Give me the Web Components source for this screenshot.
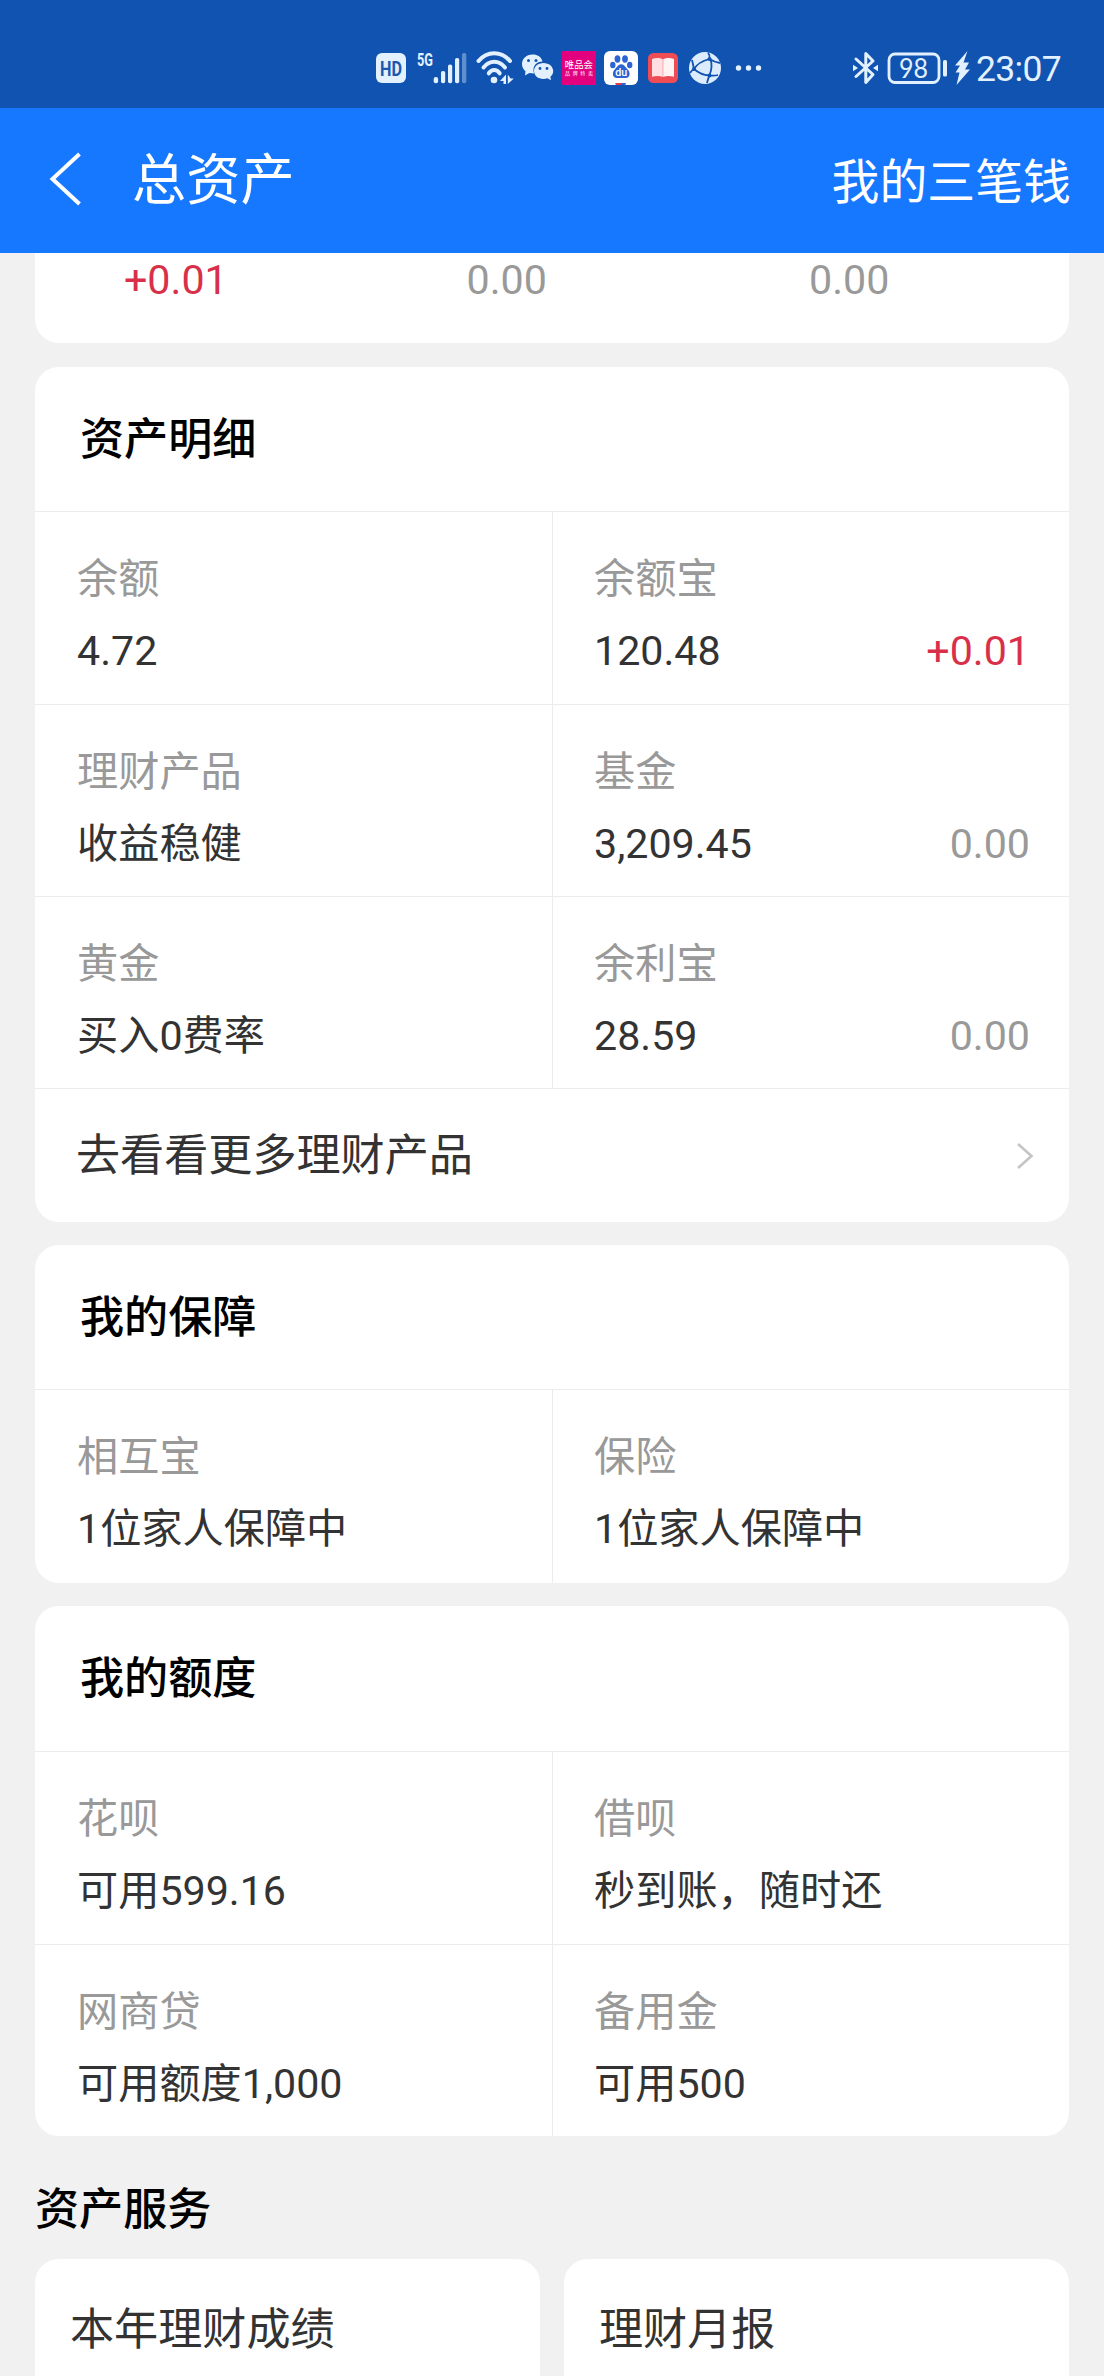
<!DOCTYPE html>
<html lang="zh-CN">
<head>
<meta charset="utf-8">
<meta name="viewport" content="width=1104">
<title>总资产</title>
<style>
html,body{margin:0;padding:0}
body{width:1104px;height:2376px;overflow:hidden;background:#f1f1f1;font-family:Roboto,"Noto Sans CJK SC",sans-serif;font-size:41.2px;color:#333}
</style>
</head>
<body>
<asset-page></asset-page>
<script>
function define(name, html) {
  const t = document.createElement('template');
  t.innerHTML = html;
  customElements.define(name, class extends HTMLElement {
    constructor() {
      super();
      this.attachShadow({mode: 'open'}).appendChild(t.content.cloneNode(true));
    }
  });
}

define('status-bar', `
<style>
:host{display:flex;align-items:center;box-sizing:border-box;height:108px;padding:27px 43px 0 376px;background:#1153b1;color:#e3f1ff}
svg{display:block;flex:none;overflow:visible}
.clock{font-size:35.5px;line-height:40px;width:85px;letter-spacing:-.7px;white-space:nowrap;margin:2px 0 0 6px}
.sp{flex:1}
</style>
<svg width="30" height="34" viewBox="0 0 30 34"><rect y="2" width="30" height="30" rx="6" fill="#e3f1ff"/><text x="15" y="24.6" text-anchor="middle" font-family="Roboto" font-weight="700" font-size="20" textLength="22" lengthAdjust="spacingAndGlyphs" fill="#1b58ae">HD</text></svg>
<svg width="51" height="34" viewBox="0 0 51 34" style="margin-left:10px"><text x="1" y="14.5" font-family="Roboto" font-weight="700" font-size="18.500" textLength="16" lengthAdjust="spacingAndGlyphs" fill="#e3f1ff">5G</text><g fill="#e3f1ff"><rect x="17.700" y="26" width="4.400" height="6.200" rx="2"/><rect x="25" y="20" width="4.200" height="12.200" rx="1.800"/><rect x="32" y="13.500" width="4.200" height="18.700" rx="1.800"/><rect x="39" y="7" width="4.200" height="25.200" rx="1.800"/><rect x="46" y="2" width="4.300" height="30.200" rx="1.800" opacity=".38"/></g></svg>
<svg width="38" height="34" viewBox="0 0 38 34" style="margin-left:9px"><g fill="none" stroke="#e3f1ff" stroke-width="4" stroke-linecap="round"><path d="M2.500 10C11-.5 25.500-.5 34 10"/><path d="M7.500 16.500C13.500 8.800 23 8.800 29 16.500"/><path d="M12.800 22.300C16 18 20.500 18 23.700 22.300"/></g><circle cx="18" cy="29" r="3.300" fill="#e3f1ff"/><path d="M30 23.500v9.500h-2.500v-3h-3.500zM31.800 23.500v9.500l6-5.500h-3.200z" fill="#e3f1ff"/></svg>
<svg width="33" height="34" viewBox="0 0 33 34" style="margin-left:7px"><path d="M11.500 3.500C5 3.500 1 8 1 13c0 3 1.300 5.500 3.500 7.200L4 24.500l4.300-2.400 4.700.5C10.800 14.500 16 10.500 21.500 10.500 20.500 6 16.500 3.500 11.500 3.500z" fill="#e3f1ff"/><path d="M22.500 12c-5.500 0-9.500 3.600-9.500 8s4 8 9.500 8c1.500 0 2.800-.3 4-.7l3.500 2-.6-3.500c1.800-1.500 2.800-3.500 2.800-5.800 0-4.400-4.200-8-9.700-8z" fill="#e3f1ff"/><g fill="#1153b1"><circle cx="7.500" cy="9.500" r="1.500"/><circle cx="15" cy="9.500" r="1.500"/><circle cx="19" cy="17.500" r="1.400"/><circle cx="26" cy="17.500" r="1.400"/></g></svg>
<svg width="34" height="34" viewBox="0 0 34 34" style="margin-left:8px"><rect width="34" height="34" rx="1" fill="#e2007f"/><g fill="#fff" font-family="Noto Sans CJK SC"><text x="2.800" y="17" font-size="9.400">唯品会</text><text x="3" y="24.300" font-size="5" textLength="28">品牌特卖</text></g></svg>
<svg width="34" height="34" viewBox="0 0 34 34" style="margin-left:8px"><rect width="34" height="34" rx="6" fill="#fff"/><g fill="#2c65d2"><ellipse cx="13.500" cy="8" rx="2.900" ry="3.700"/><ellipse cx="21" cy="8" rx="2.900" ry="3.700"/><ellipse cx="8.800" cy="14" rx="2.700" ry="3.300"/><ellipse cx="25.700" cy="14" rx="2.700" ry="3.300"/><path d="M17.200 13.200c-3.400 0-4.300 3.300-6.500 5.200-2.600 2.200-2.700 8.600 2.300 8.600h8.700c5 0 4.700-6.300 2-8.600-2.200-1.900-3.200-5.200-6.500-5.200z"/></g><text x="17.300" y="25" text-anchor="middle" font-family="Roboto" font-weight="500" font-size="10" textLength="12" lengthAdjust="spacingAndGlyphs" fill="#fff">du</text><path d="M11 32h11l-1 2h-9z" fill="#e23b50"/><path d="M17 32h5l-1 2h-4z" fill="#3468c8"/></svg>
<svg width="30" height="34" viewBox="0 0 30 34" style="margin-left:10px"><rect y="2" width="30" height="30" rx="5.500" fill="#ee4d55"/><path d="M4 8c4-1.500 8-1.300 10.800.3V26C12 24.800 8 24.800 4 25.800z" fill="#ffdfe2"/><path d="M15.200 8.300C18 6.700 22 6.500 26 8v17.800c-4-1-8-1-10.800.2z" fill="#fff4f3"/></svg>
<svg width="32" height="34" viewBox="0 0 32 34" style="margin-left:11px"><circle cx="16" cy="17" r="16" fill="#dcecfd"/><g fill="none" stroke="#1153b1" stroke-width="1.800"><path d="M19 1.500Q21 4 20.500 8Q25 11 31 12M20.500 8Q9 11 5 18Q2 20 1 22M3 9Q4 13 5 18Q12 24 20 24.500Q26 25 29 24M21.500 8Q24 16 20.500 24Q19 28 18 32"/></g><g fill="#1153b1"><circle cx="20.500" cy="8" r="2"/><circle cx="5" cy="18" r="2"/><circle cx="20.500" cy="24.500" r="2"/></g></svg>
<svg width="28" height="34" viewBox="0 0 28 34" style="margin-left:14px"><g fill="#e3f1ff"><circle cx="3.500" cy="17" r="2.700"/><circle cx="13.500" cy="17" r="2.700"/><circle cx="23.500" cy="17" r="2.700"/></g></svg>
<span class="sp"></span>
<svg width="25" height="34" viewBox="0 0 25 34"><path d="M3 8l17 15.500-7.200 8V2.500L20 10 3 25.500" fill="none" stroke="#e3f1ff" stroke-width="3" stroke-linejoin="round" stroke-linecap="round"/><path d="M0 13.800l5 3.200-5 3.200zM25 13.800L20 17l5 3.200z" fill="#e3f1ff"/></svg>
<svg width="60" height="34" viewBox="0 0 60 34" style="margin-left:9px"><rect x="2" y="3" width="50" height="28.500" rx="6" fill="none" stroke="#e3f1ff" stroke-width="2.800"/><rect x="56" y="9" width="4" height="16.500" rx="1.500" fill="#e3f1ff"/><text x="26.500" y="26.700" text-anchor="middle" font-family="Lato" font-size="26" textLength="29" lengthAdjust="spacingAndGlyphs" fill="#e3f1ff">98</text></svg>
<svg width="15" height="36" viewBox="0 0 15 36" style="margin-left:8px"><path d="M12.500 1L0 15.500h5L.5 22.500h4L1.500 35 15 19.500h-5l4-7H8.500z" fill="#e3f1ff"/></svg>
<span class="clock">23:07</span>
`);

define('nav-bar', `
<style>
:host{display:flex;align-items:center;box-sizing:border-box;height:145px;padding:0 33px 0 49px;background:#1677ff;color:#fff}
.t{font-size:54.2px;line-height:80px;margin:0 0 0 50px;flex:1}
.a{font-size:47.9px;line-height:70px;margin-top:4px}
svg{display:block;margin-top:-3px}
</style>
<svg width="33" height="54" viewBox="0 0 33 54"><path d="M30.500 2L3.500 27l27 25" fill="none" stroke="#fff" stroke-width="4"/></svg>
<div class="t"><slot name="title"></slot></div>
<div class="a"><slot name="action"></slot></div>
`);

define('summary-card', `
<style>
:host{display:flex;box-sizing:border-box;height:90px;padding:0 0 0 89px;background:#fff;border-radius:0 0 24px 24px}
::slotted(*){flex:0 0 342.5px;line-height:55px;color:#999}
::slotted(:last-child){flex:1 1 0}
::slotted(.up){color:#d9304a}
</style><slot></slot>
`);

define('asset-card', `
<style>
:host{display:block;background:#fff;border-radius:24px;overflow:hidden;margin-top:23px}
h2{margin:0;font-size:44.1px;font-weight:500;line-height:64px;color:#000;height:var(--head,144px);box-sizing:border-box;padding:41px 45px 0}
.g{display:grid;grid-template-columns:1fr 1fr}
</style>
<h2><slot name="title"></slot></h2><div class="g"><slot></slot></div><slot name="footer"></slot>
`);

define('asset-cell', `
<style>
:host{display:block;box-sizing:border-box;height:var(--h,192px);border-top:1px solid #ececec;padding:37px 39px 0 42px}
:host(:nth-child(odd)){border-left:1px solid #ececec;padding-left:41px}
.l{color:#999;line-height:60px}
.v{display:flex;justify-content:space-between;line-height:60px;margin-top:12px}
::slotted([slot=delta]){color:#999}
::slotted(.up){color:#d9304a!important}
</style>
<div class="l"><slot name="label"></slot></div>
<div class="v"><span><slot></slot></span><slot name="delta"></slot></div>
`);

define('more-link', `
<style>
:host{display:flex;align-items:center;justify-content:space-between;box-sizing:border-box;height:134px;border-top:1px solid #ececec;padding:0 35px 0 41px;font-size:44.1px;line-height:64px}
svg{display:block}
</style>
<span><slot></slot></span>
<svg width="18" height="28" viewBox="0 0 18 28"><path d="M2 2l13.500 12L2 26" fill="none" stroke="#c4c4c4" stroke-width="2.600"/></svg>
`);

define('service-card', `
<style>
:host{display:block;flex:1;height:160px;box-sizing:border-box;background:#fff;border-radius:24px 24px 0 0;padding:39px 35px 0;font-size:44.1px;line-height:64px}
</style><slot></slot>
`);

define('asset-page', `
<style>
:host{display:block}
main{padding:0 35px}
h3{margin:0;font-size:44.1px;font-weight:500;color:#000;line-height:64px;padding:42px 0 17px}
.s{display:flex;gap:24px}
.tall{--h:193px}
.lim{--head:145px}
.ins{--h:194px}
</style>
<status-bar></status-bar>
<nav-bar><span slot="title">总资产</span><span slot="action">我的三笔钱</span></nav-bar>
<main>
<summary-card><span class="up">+0.01</span><span>0.00</span><span>0.00</span></summary-card>
<asset-card style="margin-top:24px"><span slot="title">资产明细</span>
<asset-cell class="tall"><span slot="label">余额</span>4.72</asset-cell>
<asset-cell class="tall"><span slot="label">余额宝</span>120.48<span slot="delta" class="up">+0.01</span></asset-cell>
<asset-cell><span slot="label">理财产品</span>收益稳健</asset-cell>
<asset-cell><span slot="label">基金</span>3,209.45<span slot="delta">0.00</span></asset-cell>
<asset-cell><span slot="label">黄金</span>买入0费率</asset-cell>
<asset-cell><span slot="label">余利宝</span>28.59<span slot="delta">0.00</span></asset-cell>
<more-link slot="footer">去看看更多理财产品</more-link>
</asset-card>
<asset-card><span slot="title">我的保障</span>
<asset-cell class="ins"><span slot="label">相互宝</span>1位家人保障中</asset-cell>
<asset-cell class="ins"><span slot="label">保险</span>1位家人保障中</asset-cell>
</asset-card>
<asset-card class="lim"><span slot="title">我的额度</span>
<asset-cell class="tall"><span slot="label">花呗</span>可用599.16</asset-cell>
<asset-cell class="tall"><span slot="label">借呗</span>秒到账，随时还</asset-cell>
<asset-cell><span slot="label">网商贷</span>可用额度1,000</asset-cell>
<asset-cell><span slot="label">备用金</span>可用500</asset-cell>
</asset-card>
<h3>资产服务</h3>
<div class="s"><service-card>本年理财成绩</service-card><service-card>理财月报</service-card></div>
</main>
`);
</script>
</body>
</html>
